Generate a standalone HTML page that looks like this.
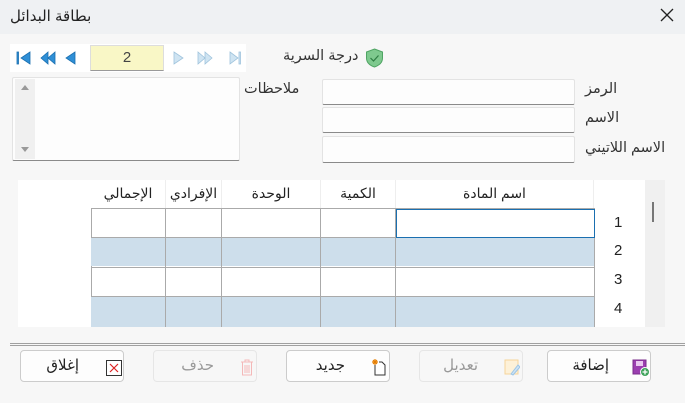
<!DOCTYPE html>
<html><head><meta charset="utf-8"><style>
*{box-sizing:border-box;margin:0;padding:0}
body{width:685px;height:403px;background:#f7f7f7;font-family:"Segoe UI","Liberation Sans","DejaVu Sans",sans-serif;font-size:14px;color:#222;position:relative;overflow:hidden}
.a{position:absolute}
.title{left:0;top:0;width:685px;height:34px;background:#eff1f3}
.inp{background:#fdfdfd;border:1px solid #e3e3e3;border-bottom:1px solid #8a8a8a;border-radius:2px}
.lbl{font-size:14.5px;color:#333;direction:rtl}
.grid{left:18px;top:180px;width:627px;height:147px;background:#fff;overflow:hidden}
.hd{position:absolute;top:0;height:28px;text-align:center;line-height:26px;font-size:14px;border-right:1px solid #eee;direction:rtl}
.btn{position:absolute;top:350px;height:32px;width:104px;border:1px solid #ccc;border-radius:4px;background:#fdfdfd;font-size:15px;direction:rtl}
.btn.dis{border-color:#e6e6e6;background:#f7f7f7;color:#999}
.btn span{position:absolute;top:5px}
</style></head><body>
<div class="a title"></div>
<div class="a" style="left:10px;top:7px;font-size:15px;direction:rtl">بطاقة البدائل</div>
<svg class="a" style="left:660px;top:8px" width="14" height="14"><path d="M1 1L13 13M13 1L1 13" stroke="#222" stroke-width="1.3"/></svg>

<div class="a" style="left:10px;top:44px;width:236px;height:28px;background:#fff"></div>
<svg class="a" style="left:10px;top:44px" width="236" height="28">
<g fill="#2f8fd6" stroke="#1a6fb0" stroke-width="0.8">
<rect x="7" y="8" width="1.5" height="12"/><path d="M20 8L11 14L20 20Z"/>
<path d="M38 8L31 14L38 20Z M45 8L38 14L45 20Z"/>
<path d="M65 8L56 14L65 20Z"/></g>
<g fill="#cfe4f2" stroke="#9fc3dc" stroke-width="0.8">
<path d="M164 8L173 14L164 20Z"/>
<path d="M188 8L195 14L188 20Z M195 8L202 14L195 20Z"/>
<path d="M220 8L228 14L220 20Z"/><rect x="229" y="8" width="1.5" height="12"/></g>
</svg>
<div class="a" style="left:90px;top:45px;width:74px;height:26px;background:#f9f7c6;border:1px solid #ddd;border-bottom-color:#999;text-align:center;line-height:24px;font-size:15px;color:#444">2</div>

<svg class="a" style="left:365px;top:48px" width="19" height="20"><path d="M9.5 1L17.5 4V10C17.5 14.5 14 17.5 9.5 19C5 17.5 1.5 14.5 1.5 10V4Z" fill="#7ec98e" stroke="#4fa463"/><path d="M5.5 10L8.5 13L13.5 7.5" stroke="#2e7d43" fill="none" stroke-width="1.2"/></svg>
<div class="a lbl" style="left:283px;top:48px">درجة السرية</div>

<div class="a inp" style="left:12px;top:77px;width:228px;height:84px"></div>
<div class="a" style="left:15px;top:79px;width:20px;height:80px;background:#f0f0f0"></div>
<svg class="a" style="left:15px;top:79px" width="20" height="80"><path d="M6 11L10 6L14 11Z M6 68L10 73L14 68Z" fill="#999"/></svg>
<div class="a lbl" style="left:244px;top:81px">ملاحظات</div>

<div class="a inp" style="left:322px;top:79px;width:253px;height:26px"></div>
<div class="a inp" style="left:322px;top:107px;width:253px;height:26px"></div>
<div class="a inp" style="left:322px;top:136px;width:253px;height:27px"></div>
<div class="a lbl" style="left:585px;top:81px">الرمز</div>
<div class="a lbl" style="left:585px;top:110px">الاسم</div>
<div class="a lbl" style="left:585px;top:140px">الاسم اللاتيني</div>

<div class="a grid">
<div class="hd" style="left:73px;width:75px">الإجمالي</div>
<div class="hd" style="left:148px;width:56px">الإفرادي</div>
<div class="hd" style="left:204px;width:99px">الوحدة</div>
<div class="hd" style="left:303px;width:75px">الكمية</div>
<div class="hd" style="left:378px;width:198px">اسم المادة</div>
<div class="a" style="left:73px;top:28px;width:1px;height:120px;background:#aaa"></div>
<div class="a" style="left:73px;top:57px;width:504px;height:29px;background:#cddeeb"></div>
<div class="a" style="left:73px;top:117px;width:504px;height:30px;background:#cddeeb"></div>
<div class="a" style="left:73px;top:28px;width:504px;height:1px;background:#aaa"></div>
<div class="a" style="left:73px;top:57px;width:504px;height:1px;background:#aaa"></div>
<div class="a" style="left:73px;top:87px;width:504px;height:1px;background:#aaa"></div>
<div class="a" style="left:73px;top:116px;width:504px;height:1px;background:#aaa"></div>
<div class="a" style="left:147px;top:28px;width:1px;height:120px;background:#aaa"></div>
<div class="a" style="left:203px;top:28px;width:1px;height:120px;background:#aaa"></div>
<div class="a" style="left:302px;top:28px;width:1px;height:120px;background:#aaa"></div>
<div class="a" style="left:377px;top:28px;width:1px;height:120px;background:#aaa"></div>
<div class="a" style="left:576px;top:28px;width:1px;height:120px;background:#aaa"></div>
<div class="a" style="left:378px;top:29px;width:199px;height:29px;border:1px solid #1a6fb0;background:#fff"></div>
<div class="a" style="left:596px;top:34px;font-size:15px">1</div>
<div class="a" style="left:596px;top:62px;font-size:15px">2</div>
<div class="a" style="left:596px;top:91px;font-size:15px">3</div>
<div class="a" style="left:596px;top:120px;font-size:15px">4</div>
</div>
<div class="a" style="left:645px;top:180px;width:20px;height:147px;background:#f0f0f0"></div>
<div class="a" style="left:652px;top:202px;width:2px;height:20px;background:#777"></div>

<div class="a" style="left:10px;top:343px;width:675px;height:3px;border-top:1px solid #a0a0a0;border-bottom:1px solid #a0a0a0"></div>

<div class="btn" style="left:20px"><span style="right:44px">إغلاق</span>
<svg class="a" style="left:85px;top:9px" width="16" height="16"><rect x="0.5" y="0.5" width="15" height="15" fill="#fff" stroke="#333"/><path d="M4 4L12 12M12 4L4 12" stroke="#d22" stroke-width="1.2"/></svg></div>
<div class="btn dis" style="left:153px"><span style="right:42px">حذف</span>
<svg class="a" style="left:86px;top:8px" width="14" height="17"><path d="M1 3H13M5 3V1H9V3M2.5 3.5V16H11.5V3.5M5 6V14M7 6V14M9 6V14" stroke="#f4b8b8" fill="none"/></svg></div>
<div class="btn" style="left:286px"><span style="right:44px">جديد</span>
<svg class="a" style="left:84px;top:7px" width="16" height="18"><path d="M4 5V17H14V7L11 4H8" stroke="#333" fill="#fff"/><path d="M4 1V7M1 4H7M2 2L6 6M6 2L2 6" stroke="#e67e00" stroke-width="1.2"/></svg></div>
<div class="btn dis" style="left:419px"><span style="right:44px">تعديل</span>
<svg class="a" style="left:84px;top:8px" width="16" height="17"><rect x="1" y="1" width="13" height="14" fill="#fdf1d8" stroke="#f6d49a"/><path d="M7 15L14 6L16 8L9 16Z" fill="#cde3f5" stroke="#9cc5e6"/></svg></div>
<div class="btn" style="left:547px"><span style="right:41px">إضافة</span>
<svg class="a" style="left:84px;top:8px" width="18" height="18"><rect x="1" y="1" width="13" height="14" fill="#9b3fb0" stroke="#7a2d8c"/><rect x="4" y="2" width="7" height="5" fill="#e9c9f0"/><circle cx="13" cy="13" r="4.5" fill="#3fa35b" stroke="#fff"/><path d="M13 10.5V15.5M10.5 13H15.5" stroke="#fff" stroke-width="1.3"/></svg></div>
</body></html>
